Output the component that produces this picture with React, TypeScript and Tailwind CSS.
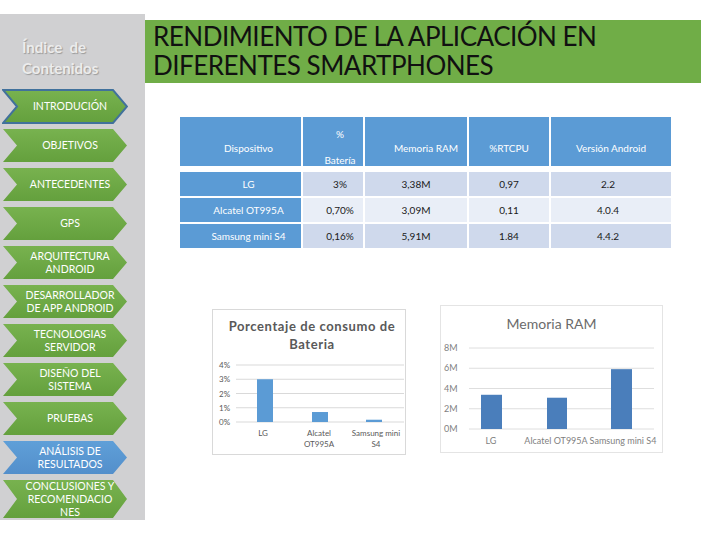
import React from "react";

type MenuItem = {
  label: string[];
  color: "green" | "blue";
  outlined?: boolean;
  tall?: boolean;
};

const menu: MenuItem[] = [
  { label: ["INTRODUCIÓN"], color: "green", outlined: true },
  { label: ["OBJETIVOS"], color: "green" },
  { label: ["ANTECEDENTES"], color: "green" },
  { label: ["GPS"], color: "green" },
  { label: ["ARQUITECTURA", "ANDROID"], color: "green" },
  { label: ["DESARROLLADOR", "DE APP ANDROID"], color: "green" },
  { label: ["TECNOLOGIAS", "SERVIDOR"], color: "green" },
  { label: ["DISEÑO DEL", "SISTEMA"], color: "green" },
  { label: ["PRUEBAS"], color: "green" },
  { label: ["ANÁLISIS DE", "RESULTADOS"], color: "blue" },
  { label: ["CONCLUSIONES Y", "RECOMENDACIO", "NES"], color: "green", tall: true },
];

const rows = [
  { device: "LG", bat: "3%", ram: "3,38M", cpu: "0,97", ver: "2.2", bg: "bg-[#cfd9ec]" },
  { device: "Alcatel OT995A", bat: "0,70%", ram: "3,09M", cpu: "0,11", ver: "4.0.4", bg: "bg-[#e9eef7]" },
  { device: "Samsung mini S4", bat: "0,16%", ram: "5,91M", cpu: "1.84", ver: "4.4.2", bg: "bg-[#cfd9ec]" },
];

const Chevron = ({ item }: { item: MenuItem }) => {
  const h = item.tall ? 40 : 35;
  const fillId = item.color === "blue" ? "chevBlue" : "chevGreen";
  return (
    <div className={`relative w-[126px] ${item.tall ? "h-[40px]" : "h-[35px]"}`}>
      <svg className="absolute inset-0" width="126" height={h} viewBox={`0 0 126 ${h}`}>
        <polygon
          points={`1,1 111,1 125,${h / 2} 111,${h - 1} 1,${h - 1} 15,${h / 2}`}
          fill={`url(#${fillId})`}
          stroke={item.outlined ? "#41719c" : "none"}
          strokeWidth={item.outlined ? 2 : 0}
        />
      </svg>
      <div className="relative flex h-full flex-col items-center justify-center pl-[10px] text-center text-[10.5px] leading-[13px] text-white">
        {item.label.map((l) => (
          <span key={l}>{l}</span>
        ))}
      </div>
    </div>
  );
};

const BatteryChart = () => (
  <div className="relative h-[146px] w-[194px] border border-[#d9d9d9] bg-white">
    <div className="pt-[7px] pl-[6px] text-center text-[13px] font-bold leading-[18px] tracking-[0.6px] text-[#595959]">
      <div>Porcentaje de consumo de</div>
      <div>Bateria</div>
    </div>
    <svg className="absolute left-0 top-0" width="194" height="146">
      {[0, 1, 2, 3, 4].map((i) => (
        <g key={i}>
          <line x1="23" x2="191" y1={112 - i * 14.25} y2={112 - i * 14.25} stroke="#d9d9d9" strokeWidth="1" />
          <text x="6" y={115 - i * 14.25} fontSize="8" fill="#595959" fontFamily="Lato, sans-serif">
            {i}%
          </text>
        </g>
      ))}
      <rect x="44" y={112 - 3 * 14.25} width="16" height={3 * 14.25} fill="#5b9bd5" />
      <rect x="99" y={112 - 0.7 * 14.25} width="16" height={0.7 * 14.25} fill="#5b9bd5" />
      <rect x="153" y={112 - 0.16 * 14.25} width="16" height={0.16 * 14.25} fill="#5b9bd5" />
      <g fontSize="8" fill="#595959" fontFamily="Lato, sans-serif" textAnchor="middle">
        <text x="50" y="126">LG</text>
        <text x="106" y="126">Alcatel</text>
        <text x="106" y="137">OT995A</text>
        <text x="163" y="126">Samsung mini</text>
        <text x="163" y="137">S4</text>
      </g>
    </svg>
  </div>
);

const RamChart = () => (
  <div className="relative h-[148px] w-[223px] border border-[#e4e4e4] bg-white">
    <div className="pt-[8px] text-center text-[14px] leading-[20px] text-[#6b6b6b]">Memoria RAM</div>
    <svg className="absolute left-0 top-0" width="223" height="148">
      {[0, 1, 2, 3, 4].map((i) => (
        <g key={i}>
          <line x1="28" x2="213" y1={123 - i * 20.25} y2={123 - i * 20.25} stroke="#dedede" strokeWidth="1" />
          <text x="3" y={126 - i * 20.25} fontSize="9" fill="#7f7f7f" fontFamily="Lato, sans-serif">
            {i * 2}M
          </text>
        </g>
      ))}
      <rect x="40" y={123 - 3.38 * 10.125} width="21" height={3.38 * 10.125} fill="#4a7ebb" />
      <rect x="106" y={123 - 3.09 * 10.125} width="20" height={3.09 * 10.125} fill="#4a7ebb" />
      <rect x="170" y={123 - 5.91 * 10.125} width="21" height={5.91 * 10.125} fill="#4a7ebb" />
      <g fontSize="9" fill="#7f7f7f" fontFamily="Lato, sans-serif" textAnchor="middle">
        <text x="50" y="138">LG</text>
        <text x="115" y="138">Alcatel OT995A</text>
        <text x="182" y="138">Samsung mini S4</text>
      </g>
    </svg>
  </div>
);

const App: React.FC = () => {
  return (
    <div className="flex h-[540px] w-[720px] overflow-hidden bg-white font-['Lato','Liberation_Sans',sans-serif]">
      <svg width="0" height="0" className="absolute">
        <defs>
          <linearGradient id="chevGreen" x1="0" y1="0" x2="0" y2="1">
            <stop offset="0" stopColor="#78b24f" />
            <stop offset="1" stopColor="#64a03d" />
          </linearGradient>
          <linearGradient id="chevBlue" x1="0" y1="0" x2="0" y2="1">
            <stop offset="0" stopColor="#5f9fd8" />
            <stop offset="1" stopColor="#538fcb" />
          </linearGradient>
        </defs>
      </svg>

      {/* Sidebar */}
      <div className="mt-[14px] flex h-[506px] w-[145px] shrink-0 flex-col bg-[#d0d0d2] pl-[2px]">
        <div className="pt-[23px] pl-[20px] text-[15px] font-bold leading-[21px] text-[#ececec] [text-shadow:1px_1px_1px_#9a9a9a]">
          <div>Índice&nbsp; de</div>
          <div>Contenidos</div>
        </div>
        <div className="mt-[10px] flex flex-col gap-[4px]">
          {menu.map((m) => (
            <Chevron key={m.label.join(" ")} item={m} />
          ))}
        </div>
      </div>

      {/* Main */}
      <div className="flex flex-1 flex-col">
        <div className="mt-[20px] h-[63px] w-[556px] bg-[#70ad47] pl-[8px] pt-[2px] text-[26px] leading-[29px] tracking-[-0.5px] text-[#111]">
          <div>RENDIMIENTO DE LA APLICACIÓN EN</div>
          <div>DIFERENTES SMARTPHONES</div>
        </div>

        {/* Table */}
        <div className="ml-[35px] mt-[34px] flex flex-col text-[10px] leading-[12px]">
          <div className="grid grid-cols-[121px_60px_102px_80px_120px] gap-x-[2px] text-white">
            <div className="flex h-[49px] items-center justify-center bg-[#5b9bd5] pl-[16px] pt-[12px]">Dispositivo</div>
            <div className="flex h-[49px] flex-col items-center bg-[#5b9bd5] pl-[14px] pt-[11px]">
              <span>%</span>
              <span className="mt-[14px]">Batería</span>
            </div>
            <div className="flex h-[49px] items-center justify-center bg-[#5b9bd5] pl-[20px] pt-[12px]">Memoria RAM</div>
            <div className="flex h-[49px] items-center justify-center bg-[#5b9bd5] pt-[12px]">%RTCPU</div>
            <div className="flex h-[49px] items-center justify-center bg-[#5b9bd5] pt-[12px]">Versión Android</div>
          </div>
          <div className="mt-[6px] flex flex-col gap-[2px]">
            {rows.map((r) => (
              <div key={r.device} className="grid h-[24px] grid-cols-[121px_60px_102px_80px_120px] gap-x-[2px] text-[#1a1a1a]">
                <div className="flex items-center justify-center bg-[#5b9bd5] pl-[16px] text-white">{r.device}</div>
                <div className={`flex items-center justify-center pl-[14px] ${r.bg}`}>{r.bat}</div>
                <div className={`flex items-center justify-center ${r.bg}`}>{r.ram}</div>
                <div className={`flex items-center justify-center ${r.bg}`}>{r.cpu}</div>
                <div className={`flex items-center justify-center pr-[6px] ${r.bg}`}>{r.ver}</div>
              </div>
            ))}
          </div>
        </div>

        {/* Charts */}
        <div className="ml-[67px] mt-[57px] flex items-start gap-[34px]">
          <div className="mt-[4px]">
            <BatteryChart />
          </div>
          <RamChart />
        </div>
      </div>
    </div>
  );
};

export default App;
